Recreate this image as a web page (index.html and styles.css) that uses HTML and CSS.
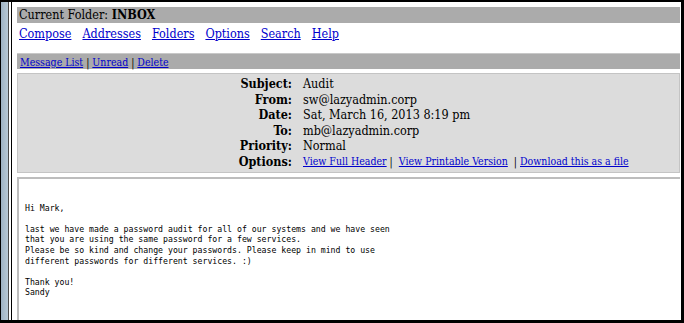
FILE: index.html
```html
<!DOCTYPE html>
<html lang="en">
<head>
    <meta charset="UTF-8">
    <title>SquirrelMail - Read Message</title>
    <link rel="stylesheet" href="styles.css">
</head>
<body>
    <div class="window">
        <div class="rail"></div>
        <div class="page">
            <div class="folder-bar">Current Folder: <b>INBOX</b></div>
            <div class="menu">
                <a href="#">Compose</a>
                <a href="#">Addresses</a>
                <a href="#">Folders</a>
                <a href="#">Options</a>
                <a href="#">Search</a>
                <a href="#">Help</a>
            </div>
            <div class="msg-bar">
                <a href="#">Message List</a> | <a href="#">Unread</a> | <a href="#">Delete</a>
            </div>
            <table class="headers">
                <tr><th>Subject:</th><td>Audit</td></tr>
                <tr><th>From:</th><td>sw@lazyadmin.corp</td></tr>
                <tr><th>Date:</th><td>Sat, March 16, 2013 8:19 pm</td></tr>
                <tr><th>To:</th><td>mb@lazyadmin.corp</td></tr>
                <tr><th>Priority:</th><td>Normal</td></tr>
                <tr>
                    <th>Options:</th>
                    <td class="opts"><a href="#">View Full Header</a> | &nbsp;<a href="#">View Printable Version</a> &nbsp;| <a href="#">Download this as a file</a></td>
                </tr>
            </table>
            <div class="message">
<pre>Hi Mark,

last we have made a password audit for all of our systems and we have seen
that you are using the same password for a few services.
Please be so kind and change your passwords. Please keep in mind to use
different passwords for different services. :)

Thank you!
Sandy</pre>
            </div>
        </div>
    </div>
</body>
</html>
```

FILE: styles.css
```css
body {
    margin: 0;
    font-family: "DejaVu Serif", serif;
    font-stretch: condensed;
    font-size: 12.5px;
    color: #000;
}
a {
    color: #0000cc;
}
.window {
    display: flex;
    height: 323px;
    box-sizing: border-box;
    border-top: 2px solid #000;
    border-right: 3px solid #000;
    border-bottom: 3px solid #000;
    border-left: 1px solid #000;
    background: #fff;
    overflow: hidden;
}
.rail {
    width: 16px;
    flex-shrink: 0;
    background: linear-gradient(to right, #9fb3c4 0, #b8c9d6 7px, #4a4a4a 7px, #4a4a4a 8px, #fff 8px, #fff 10px, #000 10px, #000 11px, #fff 11px);
}
.page {
    flex: 1;
    padding-top: 5px;
    padding-right: 1px;
}
.folder-bar {
    background: #ababab;
    height: 16px;
    line-height: 16px;
    padding-left: 2px;
}
.menu {
    display: flex;
    gap: 11px;
    padding: 3px 0 0 2px;
    height: 27px;
}
.msg-bar {
    background: #ababab;
    border-top: 1px solid #c8c8c8;
    height: 15px;
    line-height: 16px;
    padding-left: 3px;
    font-size: 10.5px;
}
.headers {
    width: 100%;
    margin-top: 4px;
    border-collapse: collapse;
    background: #dcdcdc;
    border: 1px solid #c4c4c4;
}
.headers th {
    width: 274px;
    text-align: right;
    padding: 0 11px 0 0;
    font-weight: bold;
    line-height: 15.6px;
}
.headers td {
    padding: 0;
    line-height: 15.6px;
}
.headers tr:first-child th,
.headers tr:first-child td {
    padding-top: 2px;
}
.headers tr:last-child th,
.headers tr:last-child td {
    padding-bottom: 2px;
}
.headers .opts {
    font-size: 10.5px;
}
.message {
    margin-top: 4px;
    border-top: 2px solid #bdbdbd;
    border-left: 2px solid #bdbdbd;
    height: 200px;
    padding: 24px 0 0 6px;
}
.message pre {
    margin: 0;
    font-family: "DejaVu Sans Mono", monospace;
    font-stretch: normal;
    font-size: 8.2px;
    line-height: 10.6px;
}
```
